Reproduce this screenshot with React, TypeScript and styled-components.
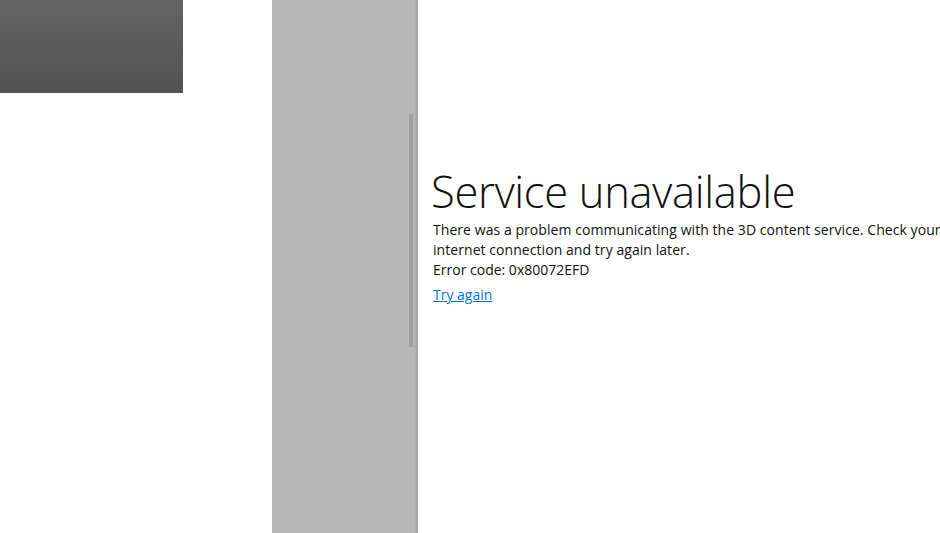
import React from "react";
import styled, { createGlobalStyle } from "styled-components";

const Global = createGlobalStyle`
  html, body { margin: 0; padding: 0; background: #ffffff; overflow: hidden; }
  body { font-family: "Open Sans", "Noto Sans", sans-serif; }
`;

const Page = styled.div`
  display: flex;
  width: 940px;
  height: 533px;
  overflow: hidden;
  background: #ffffff;
`;

const LeftColumn = styled.div`
  flex: 0 0 272px;
  display: flex;
  flex-direction: column;
`;

const Tile = styled.div`
  width: 183px;
  height: 93px;
  background: linear-gradient(to bottom, #646464, #535353);
`;

const Panel = styled.div`
  flex: 0 0 146px;
  display: flex;
  justify-content: flex-end;
  align-items: flex-start;
  padding-top: 114px;
  padding-right: 5px;
  box-sizing: border-box;
  background: linear-gradient(to right, #b7b8b7 0, #b7b8b7 calc(100% - 4px), #a9aaa9 calc(100% - 2px), #9d9e9d 100%);
`;

const ScrollThumb = styled.div`
  width: 4px;
  height: 233px;
  background: #9e9f9e;
`;

const Content = styled.div`
  flex: 0 0 auto;
  width: 540px;
  padding-top: 164px;
  padding-left: 13px;
  color: #000000;
`;

const Title = styled.h1`
  margin: 0 0 1px 0;
  font-family: "Open Sans", sans-serif;
  font-weight: 300;
  font-size: 43.5px;
  line-height: 55px;
  letter-spacing: -0.3px;
  color: #111111;
  white-space: nowrap;
`;

const Message = styled.p`
  margin: 0 0 0 2px;
  font-family: "Open Sans", sans-serif;
  font-size: 14px;
  line-height: 20px;
  letter-spacing: 0.06px;
  width: 525px;
  color: #111111;
`;

const Code = styled.p`
  margin: 0 0 0 2px;
  font-family: "Open Sans", sans-serif;
  font-size: 14px;
  line-height: 20px;
  color: #111111;
`;

const RetryLink = styled.a`
  display: inline-block;
  margin: 5px 0 0 2px;
  font-family: "Open Sans", sans-serif;
  font-size: 14px;
  line-height: 20px;
  color: #0078d7;
  text-decoration: underline;
  cursor: pointer;
`;

export default function App() {
  return (
    <>
      <Global />
      <Page>
        <LeftColumn>
          <Tile />
        </LeftColumn>
        <Panel>
          <ScrollThumb />
        </Panel>
        <Content>
          <Title>Service unavailable</Title>
          <Message>
            There was a problem communicating with the 3D content service. Check your internet connection and try again later.
          </Message>
          <Code>Error code: 0x80072EFD</Code>
          <RetryLink>Try again</RetryLink>
        </Content>
      </Page>
    </>
  );
}
